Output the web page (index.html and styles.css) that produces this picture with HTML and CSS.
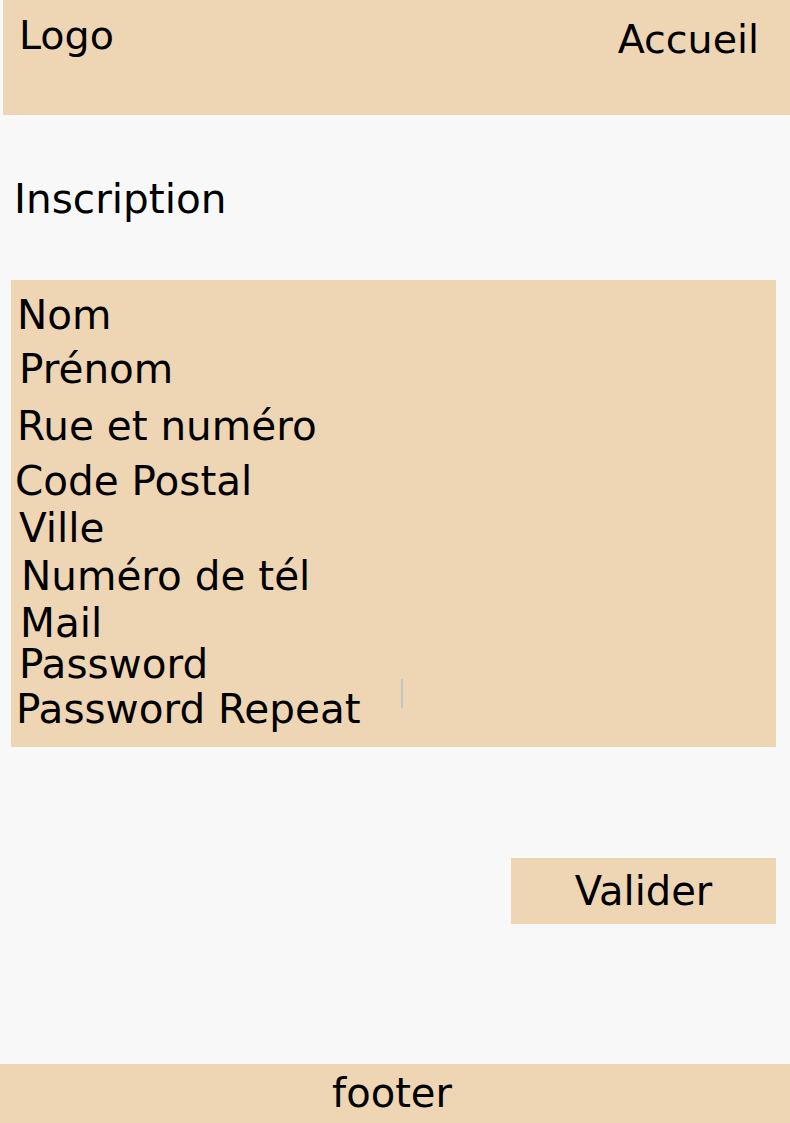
FILE: index.html
```html
<!DOCTYPE html>
<html lang="fr">
<head>
<meta charset="utf-8">
<title>Inscription</title>
<link rel="stylesheet" href="styles.css">
</head>
<body>
<div class="page">
  <header class="header">
    <div class="logo">Logo</div>
    <nav class="nav">Accueil</nav>
  </header>
  <h1 class="title">Inscription</h1>
  <form class="form">
    <div class="field f1">Nom</div>
    <div class="field f2">Prénom</div>
    <div class="field f3">Rue et numéro</div>
    <div class="field f4">Code Postal</div>
    <div class="field f5">Ville</div>
    <div class="field f6">Numéro de tél</div>
    <div class="field f7">Mail</div>
    <div class="field f8">Password</div>
    <div class="field f9"><span>Password Repeat</span><span class="caret"></span></div>
  </form>
  <div class="actions">
    <button class="btn" type="button">Valider</button>
  </div>
  <footer class="footer">footer</footer>
</div>
</body>
</html>
```
FILE: styles.css
```css
html, body {
  margin: 0;
  padding: 0;
  background: #f8f8f8;
}
.page {
  display: flex;
  flex-direction: column;
  height: 1123px;
  font-family: "DejaVu Sans", Verdana, sans-serif;
  color: #000;
}
.header {
  display: flex;
  justify-content: space-between;
  align-items: flex-start;
  margin-left: 3px;
  height: 115px;
  box-sizing: border-box;
  padding: 15px 31px 0 16px;
  background: #eed5b4;
  font-size: 39.6px;
  line-height: 40px;
}
.nav {
  margin-top: 4px;
}
.title {
  margin: 64px 0 0 14px;
  font-size: 40.6px;
  line-height: 40px;
  font-weight: normal;
}
.form {
  margin: 61px 14px 0 11px;
  padding: 17px 0 20px 0;
  background: #eed5b4;
  display: flex;
  flex-direction: column;
  font-size: 40.5px;
  line-height: 36px;
}
.field {
  height: 36px;
  white-space: nowrap;
}
.f1 { margin-left: 6px; }
.f2 { margin: 18px 0 0 8px; }
.f3 { margin: 21px 0 0 6px; }
.f4 { margin: 19px 0 0 4px; }
.f5 { margin: 11px 0 0 8px; }
.f6 { margin: 12px 0 0 10px; }
.f7 { margin: 11px 0 0 9px; }
.f8 { margin: 5px 0 0 8px; }
.f9 {
  margin: 9px 0 0 5px;
  display: flex;
  align-items: flex-start;
}
.caret {
  flex: none;
  width: 2px;
  height: 29px;
  margin: -12px 0 0 40px;
  background: #bcc8c0;
}
.actions {
  display: flex;
  justify-content: flex-end;
  margin: 111px 14px 0 0;
}
.btn {
  width: 265px;
  height: 66px;
  padding: 0;
  border: 0;
  background: #eed5b4;
  font-family: "DejaVu Sans", Verdana, sans-serif;
  font-size: 40px;
  line-height: 66px;
  color: #000;
  text-align: center;
}
.footer {
  margin-top: auto;
  height: 59px;
  padding-right: 6px;
  background: #eed5b4;
  text-align: center;
  font-size: 40px;
  line-height: 59px;
}
```
